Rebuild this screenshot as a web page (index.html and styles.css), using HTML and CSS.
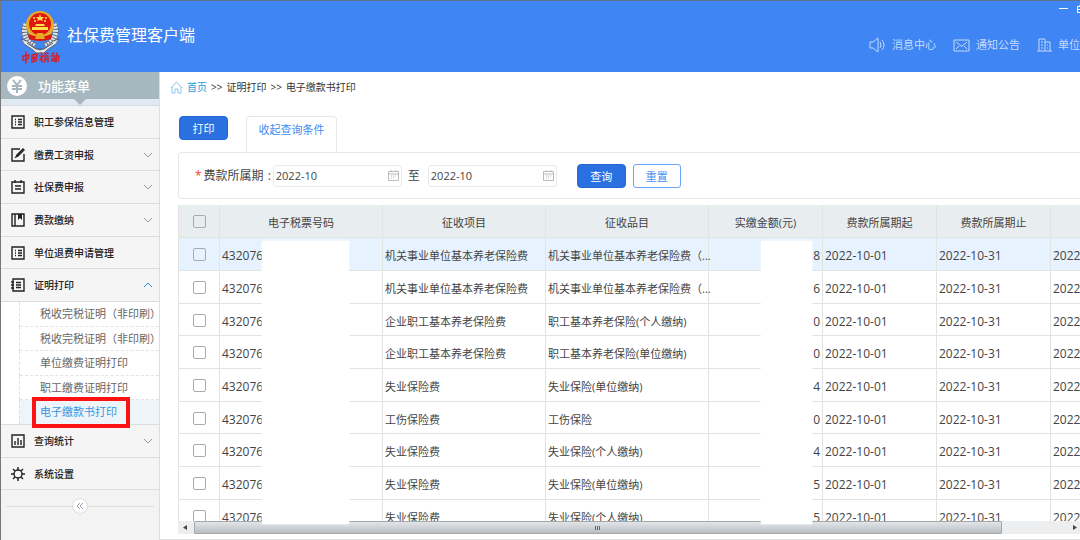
FILE: index.html
```html
<!DOCTYPE html>
<html lang="zh-CN">
<head>
  <meta charset="UTF-8">
  <meta name="viewport" content="width=device-width, initial-scale=1.0">
  <title>社保费管理客户端</title>
  <link rel="stylesheet" href="styles.css">
</head>
<body>
  <!-- Top bar -->
  <header class="header">
    <svg class="logo" width="40" height="54" viewBox="0 0 40 54">
      <g fill="none" stroke="#5d6878" stroke-width="6">
        <path d="M6 13C2 22 6 31 15 35"/>
        <path d="M34 13C38 22 34 31 25 35"/>
      </g>
      <g fill="none" stroke="#dfe2e6" stroke-width="5" stroke-dasharray="2 1">
        <path d="M6 13C2 22 6 31 15 35"/>
        <path d="M34 13C38 22 34 31 25 35"/>
      </g>
      <path d="M1 28l6 2 8 7 5 2 5-2 8-7 6-2-3 5-9 6-3 3H16l-3-3-9-6z" fill="#e3e6e8" stroke="#56627a" stroke-width="1"/>
      <path d="M7 32l9 6h8l9-6" fill="none" stroke="#56627a" stroke-width="1"/>
      <circle cx="20" cy="14" r="14" fill="#e6a92a"/>
      <circle cx="20" cy="13" r="11" fill="#de160d"/>
      <path d="M20 3l1 3h3l-2 2 1 2-3-1-3 1 1-2-2-2h3z" fill="#ffe04a"/>
      <g fill="#ffe04a">
        <circle cx="14" cy="7" r="1"/><circle cx="26" cy="7" r="1"/>
        <circle cx="15" cy="10" r="1"/><circle cx="25" cy="10" r="1"/>
        <path d="M16 13h8l1 2H15zM12 16h16v3H12z"/>
      </g>
      <path d="M8 23q12 5 24 0l-1 5q-11 4-22 0z" fill="#de160d"/>
      <path d="M17 22h6l2 6H15z" fill="#e6a92a"/>
      <g fill="none" stroke="#d2202c" stroke-width="1.4" stroke-linecap="round">
        <path d="M3 45l6-1-1 4-5 1zM6 41v11"/>
        <path d="M12 44l5-1-1 7-4 1zM13 47h3M14 45v4"/>
        <path d="M21 42l1 1M20 45h3l-3 4M22 46v5M25 43l3-1M25 45h3v3h-3zM26 48l-2 3M28 48v3"/>
        <path d="M32 43l2-1M31 45h4M32 48l3-1v3h-3zM37 42l-1 9M35 45h4l-1 5"/>
      </g>
    </svg>
    <h1 class="title">社保费管理客户端</h1>
    <nav class="top-nav">
      <a href="#" class="top-link">
        <svg width="17" height="16" viewBox="0 0 17 16"><path d="M1 5h3l5-4v14l-5-4H1zM11 5q2 3 0 6M13 3q4 5 0 10"/></svg>
        消息中心
      </a>
      <a href="#" class="top-link">
        <svg width="17" height="16" viewBox="0 0 17 16"><path d="M1 3h15v11H1zM3 5l5 4h1l5-4M3 12l3-3M14 12l-3-3"/></svg>
        通知公告
      </a>
      <a href="#" class="top-link">
        <svg width="15" height="16" viewBox="0 0 15 16"><path d="M2 14V2h6v12M8 5h5v9M0 14h15M4 5h2M4 8h2M4 11h2M10 8h1M10 11h1"/></svg>
        单位信息
      </a>
    </nav>
    <div class="window-buttons">
      <button class="window-button" aria-label="最小化"><svg width="9" height="9" viewBox="0 0 9 9"><path d="M0 4.500h9"/></svg></button>
      <button class="window-button" aria-label="最大化"><svg width="9" height="9" viewBox="0 0 9 9"><path d="M.5 2.500h5v6h-5zM3 2.500v-2h5v6H6M.5 5.500h5"/></svg></button>
    </div>
  </header>

  <div class="layout">
    <!-- Side menu -->
    <aside class="sidebar">
      <div class="menu-head">
        <svg width="20" height="20" viewBox="0 0 20 20"><circle cx="10" cy="10" r="10" fill="#fff"/><path d="M6 4l4 5 4-5M5 10h10M5 13h10M10 9v8" fill="none" stroke="#a4b5be" stroke-width="2"/></svg>
        功能菜单
      </div>
      <div class="menu-notch"></div>
      <ul class="menu">
        <li><a href="#" class="menu-item">
          <svg class="menu-icon" viewBox="0 0 14 14"><path d="M1 1h12v12H1z"/><path d="M4 4.500h1M4 7h1M4 9.500h1M7 4.500h4M7 7h4M7 9.500h4"/></svg>
          职工参保信息管理</a></li>
        <li><a href="#" class="menu-item">
          <svg class="menu-icon" viewBox="0 0 14 14"><path d="M9 1H1v12h12V6M5 9l1-2 6-6 1 1-6 6z"/></svg>
          缴费工资申报
          <svg class="arrow" viewBox="0 0 8 8"><path d="M0 2l4 4 4-4"/></svg></a></li>
        <li><a href="#" class="menu-item">
          <svg class="menu-icon" viewBox="0 0 14 14"><path d="M1 2h12v11H1zM4 0v3M10 0v3M4 6h6M4 9h6"/></svg>
          社保费申报
          <svg class="arrow" viewBox="0 0 8 8"><path d="M0 2l4 4 4-4"/></svg></a></li>
        <li><a href="#" class="menu-item">
          <svg class="menu-icon" viewBox="0 0 14 14"><path d="M1 1h12v12H1zM4 1v12"/><path d="M7 1h4v6L9 5 7 7z" fill="#222" stroke="none"/></svg>
          费款缴纳
          <svg class="arrow" viewBox="0 0 8 8"><path d="M0 2l4 4 4-4"/></svg></a></li>
        <li><a href="#" class="menu-item">
          <svg class="menu-icon" viewBox="0 0 14 14"><path d="M1 1h12v12H1z"/><path d="M4 4.500h1M4 7h1M4 9.500h1M7 4.500h4M7 7h4M7 9.500h4"/></svg>
          单位退费申请管理</a></li>
        <li>
          <a href="#" class="menu-item">
            <svg class="menu-icon" viewBox="0 0 14 14"><path d="M2 1h11v12H2zM0 4h3M0 7h3M0 10h3M5 4.500h5M5 7h5M5 9.500h5"/></svg>
            证明打印
            <svg class="arrow arrow-up" viewBox="0 0 8 8"><path d="M0 6l4-4 4 4"/></svg>
          </a>
          <ul class="submenu">
            <li><a href="#" class="submenu-item">税收完税证明（非印刷）</a></li>
            <li><a href="#" class="submenu-item">税收完税证明（非印刷）</a></li>
            <li><a href="#" class="submenu-item">单位缴费证明打印</a></li>
            <li><a href="#" class="submenu-item">职工缴费证明打印</a></li>
            <li class="current"><a href="#" class="submenu-item">电子缴款书打印</a><span class="marker"></span></li>
          </ul>
        </li>
        <li><a href="#" class="menu-item">
          <svg class="menu-icon" viewBox="0 0 14 14"><path d="M1 1h12v12H1zM4 7v4M7 4v7M10 6v5"/></svg>
          查询统计
          <svg class="arrow" viewBox="0 0 8 8"><path d="M0 2l4 4 4-4"/></svg></a></li>
        <li><a href="#" class="menu-item">
          <svg class="menu-icon" viewBox="0 0 14 14"><circle cx="7" cy="7" r="4"/><path d="M7 0v3M7 11v3M0 7h3M11 7h3M2 2l2 2M10 10l2 2M12 2l-2 2M4 10l-2 2"/></svg>
          系统设置</a></li>
      </ul>
      <div class="collapse">
        <button class="collapse-button" aria-label="收起菜单"><svg width="8" height="8" viewBox="0 0 8 8"><path d="M4 1L1 4l3 3M7 1L4 4l3 3"/></svg></button>
      </div>
    </aside>

    <main class="main">
      <nav class="breadcrumb">
        <svg width="13" height="13" viewBox="0 0 13 13"><path d="M1 7l5.500-6L12 7M2 6v6h3V8h3v4h3V6"/></svg>
        <a href="#">首页</a>
        <span>&gt;&gt;</span>
        <span>证明打印</span>
        <span>&gt;&gt;</span>
        <span>电子缴款书打印</span>
      </nav>

      <div class="toolbar">
        <button class="btn">打印</button>
        <button class="tab">收起查询条件</button>
      </div>

      <!-- Query form -->
      <form class="query">
        <label for="periodFrom"><span class="required">*</span>费款所属期<span class="colon">:</span></label>
        <div class="date-box">
          <input type="text" id="periodFrom" value="2022-10">
          <svg width="11" height="11" viewBox="0 0 11 11"><path d="M.5 1.500h10v9H.5zM.5 4h10M3 0v2M8 0v2M3 6h1M5 6h1M7 6h1M3 8h1M5 8h1"/></svg>
        </div>
        <label for="periodTo" class="to">至</label>
        <div class="date-box">
          <input type="text" id="periodTo" value="2022-10">
          <svg width="11" height="11" viewBox="0 0 11 11"><path d="M.5 1.500h10v9H.5zM.5 4h10M3 0v2M8 0v2M3 6h1M5 6h1M7 6h1M3 8h1M5 8h1"/></svg>
        </div>
        <button type="button" class="btn search">查询</button>
        <button type="reset" class="btn-plain">重置</button>
      </form>

      <!-- Result table -->
      <div class="grid">
        <div class="grid-view">
          <table class="table">
            <colgroup>
              <col class="col-check"><col class="col-wide"><col class="col-wide"><col class="col-wide">
              <col class="col-narrow"><col class="col-narrow"><col class="col-narrow"><col class="col-narrow">
            </colgroup>
            <thead>
              <tr>
                <th><input type="checkbox" aria-label="全选"></th>
                <th>电子税票号码</th><th>征收项目</th><th>征收品目</th><th>实缴金额(元)</th><th>费款所属期起</th><th>费款所属期止</th><th></th>
              </tr>
            </thead>
            <tbody>
              <tr class="active">
                <td><input type="checkbox" aria-label="选择第1行"></td>
                <td class="num">432076</td><td>机关事业单位基本养老保险费</td><td>机关事业单位基本养老保险费（...</td>
                <td class="num amount">8</td><td class="num">2022-10-01</td><td class="num">2022-10-31</td><td class="num">2022</td>
              </tr>
              <tr>
                <td><input type="checkbox" aria-label="选择第2行"></td>
                <td class="num">432076</td><td>机关事业单位基本养老保险费</td><td>机关事业单位基本养老保险费（...</td>
                <td class="num amount">6</td><td class="num">2022-10-01</td><td class="num">2022-10-31</td><td class="num">2022</td>
              </tr>
              <tr>
                <td><input type="checkbox" aria-label="选择第3行"></td>
                <td class="num">432076</td><td>企业职工基本养老保险费</td><td>职工基本养老保险(个人缴纳)</td>
                <td class="num amount">0</td><td class="num">2022-10-01</td><td class="num">2022-10-31</td><td class="num">2022</td>
              </tr>
              <tr>
                <td><input type="checkbox" aria-label="选择第4行"></td>
                <td class="num">432076</td><td>企业职工基本养老保险费</td><td>职工基本养老保险(单位缴纳)</td>
                <td class="num amount">0</td><td class="num">2022-10-01</td><td class="num">2022-10-31</td><td class="num">2022</td>
              </tr>
              <tr>
                <td><input type="checkbox" aria-label="选择第5行"></td>
                <td class="num">432076</td><td>失业保险费</td><td>失业保险(单位缴纳)</td>
                <td class="num amount">4</td><td class="num">2022-10-01</td><td class="num">2022-10-31</td><td class="num">2022</td>
              </tr>
              <tr>
                <td><input type="checkbox" aria-label="选择第6行"></td>
                <td class="num">432076</td><td>工伤保险费</td><td>工伤保险</td>
                <td class="num amount">0</td><td class="num">2022-10-01</td><td class="num">2022-10-31</td><td class="num">2022</td>
              </tr>
              <tr>
                <td><input type="checkbox" aria-label="选择第7行"></td>
                <td class="num">432076</td><td>失业保险费</td><td>失业保险(个人缴纳)</td>
                <td class="num amount">4</td><td class="num">2022-10-01</td><td class="num">2022-10-31</td><td class="num">2022</td>
              </tr>
              <tr>
                <td><input type="checkbox" aria-label="选择第8行"></td>
                <td class="num">432076</td><td>失业保险费</td><td>失业保险(单位缴纳)</td>
                <td class="num amount">5</td><td class="num">2022-10-01</td><td class="num">2022-10-31</td><td class="num">2022</td>
              </tr>
              <tr>
                <td><input type="checkbox" aria-label="选择第9行"></td>
                <td class="num">432076</td><td>失业保险费</td><td>失业保险(个人缴纳)</td>
                <td class="num amount">5</td><td class="num">2022-10-01</td><td class="num">2022-10-31</td><td class="num">2022</td>
              </tr>
            </tbody>
          </table>
        </div>
        <div class="scrollbar">
          <svg class="scroll-arrow" viewBox="0 0 16 13"><path d="M9 4v5L5 6.500z"/></svg>
          <div class="thumb"><i></i><i></i><i></i></div>
          <svg class="scroll-arrow scroll-right" viewBox="0 0 16 13"><path d="M9 4v5l4-2.500z"/></svg>
        </div>
        <!-- Hidden digits -->
        <div class="mask mask-number"></div>
        <div class="mask mask-amount"></div>
      </div>
    </main>
  </div>
</body>
</html>
```
FILE: styles.css
```css
* {
  box-sizing: border-box;
}
body {
  margin: 0;
  height: 100vh;
  display: flex;
  flex-direction: column;
  overflow: hidden;
  background-color: #fff;
  border-left: 1px solid #777;
  border-top: 1px solid #5f6f8e;
  font-family: "Open Sans", "Noto Sans CJK SC", sans-serif;
  font-size: 11px;
  line-height: 16px;
  color: #444;
}
a {
  color: inherit;
  text-decoration: none;
}
ul {
  margin: 0;
  padding: 0;
  list-style: none;
}
button,
input {
  font-family: inherit;
  font-size: 11px;
  margin: 0;
}
button {
  padding: 0;
  cursor: pointer;
}
svg {
  flex: none;
}

/* Top bar */
.header {
  position: relative;
  flex: none;
  height: 71px;
  display: flex;
  align-items: center;
  padding-left: 19px;
  background-color: #3f85f3;
  color: #fff;
  overflow: hidden;
}
.logo {
  margin-top: 2px;
}
.title {
  margin: 0 0 4px 7px;
  font-size: 16px;
  line-height: 24px;
  font-weight: 400;
}
.top-nav {
  display: flex;
  gap: 17px;
  margin: 16px -22px 0 auto;
  color: #c6dbfb;
}
.top-link {
  display: flex;
  align-items: center;
  gap: 6px;
  white-space: nowrap;
}
.top-link svg,
.window-button svg {
  fill: none;
  stroke: #c6dbfb;
}
.window-buttons {
  position: absolute;
  top: 3px;
  right: -6px;
  display: flex;
  gap: 9px;
}
.window-button {
  height: 9px;
  border: none;
  background: none;
  display: flex;
}
.window-button svg {
  stroke: #fff;
}

/* Side menu */
.layout {
  flex: 1;
  min-height: 0;
  display: flex;
}
.sidebar {
  flex: none;
  width: 159px;
  background-color: #f3f3f3;
  border-right: 1px solid #dcdfe1;
}
.menu-head {
  height: 27px;
  display: flex;
  align-items: center;
  gap: 11px;
  padding-left: 6px;
  background-color: #a6b7bf;
  color: #fff;
  font-size: 13px;
  font-weight: 500;
}
.menu-notch {
  height: 7px;
  background-color: #e1eaf2;
  border-bottom: 1px solid #d8dcdf;
}
.menu-notch::before {
  content: "";
  display: block;
  width: 0;
  margin: 0 auto;
  border: 6px solid transparent;
  border-top-color: #a6b7bf;
  border-bottom: none;
}
.menu-item {
  height: 33px;
  display: flex;
  align-items: center;
  padding: 0 7px 0 10px;
  border-bottom: 1px solid #dedede;
  background-color: #f5f5f5;
  color: #222;
  font-size: 10px;
  font-weight: 500;
  white-space: nowrap;
}
.menu > li:nth-child(3n + 2) > .menu-item {
  height: 32px;
}
.menu-icon {
  width: 14px;
  height: 14px;
  margin-right: 9px;
  fill: none;
  stroke: #222;
  stroke-width: 1.4;
}
.arrow {
  width: 8px;
  height: 8px;
  margin-left: auto;
  fill: none;
  stroke: #999;
}
.arrow-up {
  stroke: #2b86e0;
}
.submenu {
  background-color: #fff;
  border-bottom: 1px solid #dedede;
}
.submenu li {
  position: relative;
  height: 25px;
  margin-left: 18px;
  border-left: 1px dashed #d3e1eb;
}
.submenu li:nth-child(even) {
  height: 24px;
}
.submenu-item {
  height: 100%;
  display: flex;
  align-items: center;
  padding-left: 20px;
  border-bottom: 1px dashed #dfe5ea;
  color: #666;
  white-space: nowrap;
  overflow: hidden;
}
.submenu .current {
  height: 24px;
  background-color: #edf4fa;
}
.current .submenu-item {
  color: #3a95dc;
  border-bottom: none;
}
.marker {
  position: absolute;
  top: -3px;
  left: 12px;
  width: 98px;
  height: 31px;
  border: 4px solid #fb1212;
}
.collapse {
  display: flex;
  align-items: center;
  padding: 8px 5px;
}
.collapse::before,
.collapse::after {
  content: "";
  flex: 1;
  border-top: 1px solid #ddd;
}
.collapse-button {
  width: 16px;
  height: 16px;
  display: flex;
  align-items: center;
  justify-content: center;
  border: 1px solid #ddd;
  border-radius: 50%;
  background-color: #fff;
}
.collapse-button svg {
  fill: none;
  stroke: #8ea4b8;
}

/* Content */
.main {
  flex: 1;
  min-width: 0;
  display: flex;
  flex-direction: column;
  padding: 0 0 5px 18px;
  border-bottom: 1px solid #ddd;
}
.breadcrumb {
  height: 30px;
  display: flex;
  align-items: center;
  gap: 4px;
  margin-left: -8px;
  font-size: 10px;
  color: #333;
}
.breadcrumb svg {
  fill: none;
  stroke: #8cc4e6;
}
.breadcrumb a {
  color: #2d9bd8;
}
.toolbar {
  display: flex;
  align-items: flex-start;
  gap: 18px;
  padding: 14px 0 0 1px;
}
.btn {
  width: 49px;
  height: 24px;
  border: 1px solid #2468d6;
  border-radius: 4px;
  background-color: #2a70e0;
  color: #fff;
}
.tab {
  width: 91px;
  height: 37px;
  margin-bottom: -1px;
  padding-bottom: 13px;
  border: 1px solid #e6e6e6;
  border-bottom: none;
  border-radius: 4px 4px 0 0;
  background-color: #fff;
  color: #3f8cf0;
}
.query {
  height: 47px;
  display: flex;
  align-items: center;
  padding-left: 16px;
  border: 1px solid #e8e8e8;
  border-right: none;
  border-radius: 4px 0 0 4px;
  font-size: 12px;
}
.required {
  margin-right: 2px;
  color: #f33;
}
.colon {
  padding: 0 2px 0 4px;
}
.date-box {
  width: 129px;
  height: 22px;
  display: flex;
  align-items: center;
  padding: 0 2px;
  border: 1px solid #e9e9e9;
  border-radius: 3px;
}
.date-box input {
  flex: 1;
  min-width: 0;
  padding: 0;
  border: none;
  outline: none;
  background: none;
  color: #444;
}
.date-box svg {
  fill: none;
  stroke: #bbb;
}
.to {
  margin: 0 8px 0 6px;
}
.search {
  margin-left: 20px;
}
.btn-plain {
  width: 48px;
  height: 24px;
  margin-left: 7px;
  border: 1px solid #6ca6f5;
  border-radius: 3px;
  background-color: #fff;
  color: #4a90f0;
}

/* Table */
.grid {
  position: relative;
  flex: 1;
  min-height: 0;
  margin-top: 6px;
  display: flex;
  flex-direction: column;
}
.grid-view {
  flex: 1;
  min-height: 0;
  overflow: hidden;
}
.table {
  width: 986px;
  table-layout: fixed;
  border-spacing: 0;
  border-left: 1px solid #e2e4e4;
}
.col-check {
  width: 41px;
}
.col-wide {
  width: 163px;
}
.col-narrow {
  width: 114px;
}
.table tr {
  height: 33px;
}
.table tbody tr:nth-child(3n) {
  height: 32px;
}
.table th,
.table td {
  padding: 4px 2px 0;
  border-right: 1px solid #e2e4e2;
  border-bottom: 1px solid #e2e4e2;
  font-weight: 400;
  text-align: left;
  white-space: nowrap;
}
.table th {
  background-color: #e8edf0;
  text-align: center;
}
.table th:first-child,
.table td:first-child {
  padding-top: 1px;
}
.table .num {
  font-size: 12px;
}
.table .amount {
  text-align: right;
}
.table .active td {
  background-color: #e6f3fe;
}
.table input {
  display: block;
  width: 13px;
  height: 13px;
  margin: 0 auto;
  appearance: none;
  border: 1px solid #a5abb0;
  border-radius: 2px;
}
.scrollbar {
  flex: none;
  height: 13px;
  display: flex;
  background-color: #eceeef;
}
.scroll-arrow {
  width: 16px;
  height: 13px;
  fill: #444;
}
.scroll-right {
  margin-left: auto;
}
.thumb {
  width: calc(90% - 4px);
  display: flex;
  justify-content: center;
  gap: 1px;
  padding-top: 4px;
  border: 1px solid #a3a8ac;
  border-radius: 1px;
  background: linear-gradient(#e2e5e8, #b9bfc4);
}
.thumb i {
  width: 1px;
  height: 4px;
  background-color: #666;
}
.mask {
  position: absolute;
  top: 36px;
  bottom: 10px;
  background-color: #fff;
  box-shadow: 0 0 2px #fff;
}
.mask-number {
  left: 84px;
  width: 87px;
}
.mask-amount {
  left: 583px;
  width: 51px;
}
```
